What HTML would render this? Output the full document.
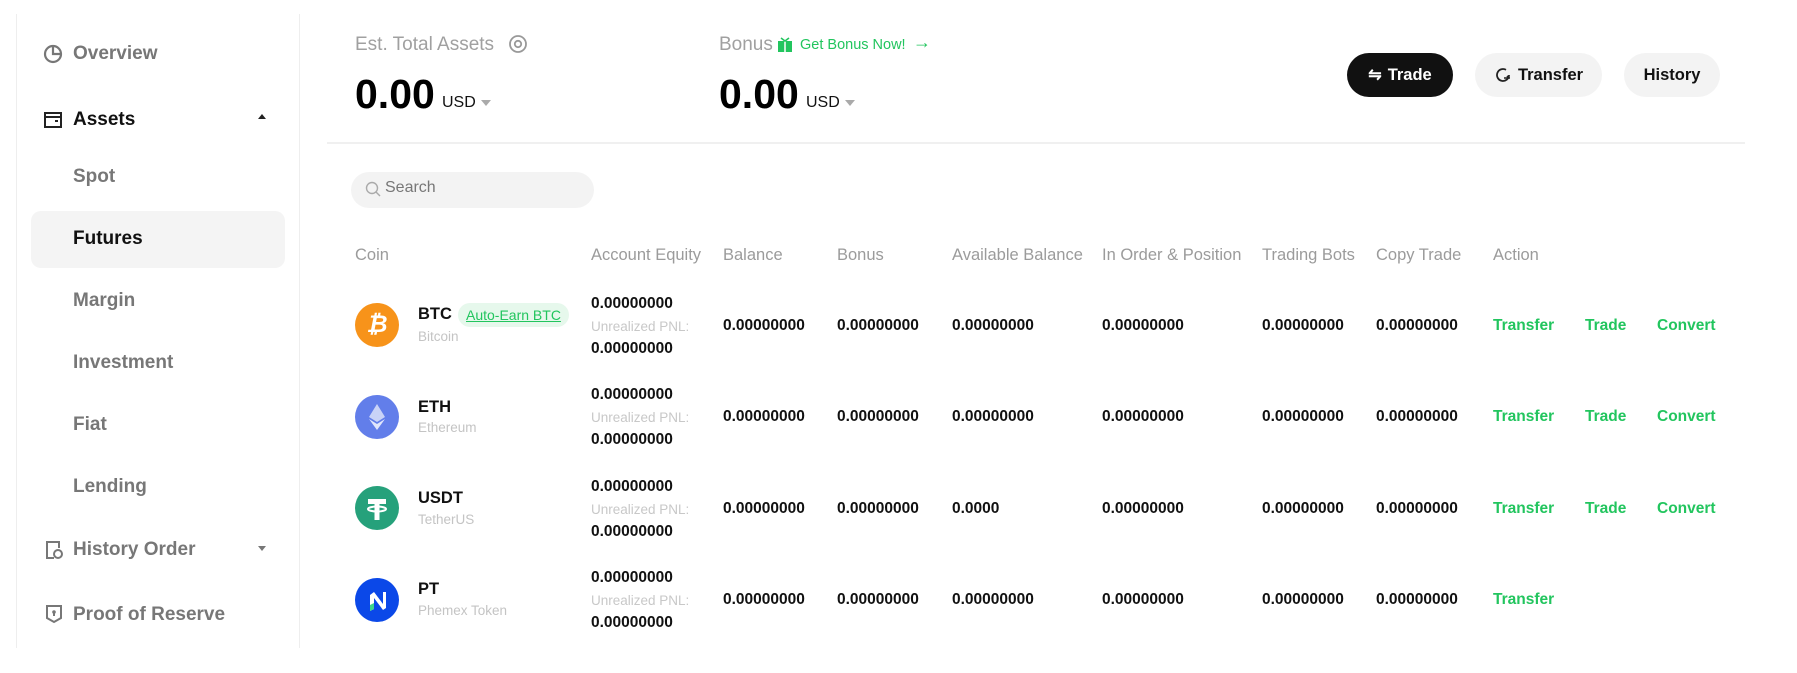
<!DOCTYPE html>
<html><head><meta charset="utf-8"><style>
*{margin:0;padding:0;box-sizing:border-box}
body{width:1797px;height:673px;background:#fff;font-family:"Liberation Sans",sans-serif;position:relative;overflow:hidden;color:#111}
.a{position:absolute;white-space:nowrap}
.side{position:absolute;left:16px;top:14px;width:284px;height:634px;border-left:1px solid #eee;border-right:1px solid #eee}
.si{position:absolute;left:73px;font-size:19px;font-weight:bold;color:#777}
.hd{position:absolute;top:246px;font-size:16.5px;color:#9b9b9b}
.v{position:absolute;font-size:15.5px;font-weight:bold;color:#111}
.g{position:absolute;font-size:15.5px;font-weight:bold;color:#22c55e}
.ic{position:absolute;left:355px;width:44px;height:44px;border-radius:50%}
.cn{position:absolute;left:418px;font-size:16.5px;font-weight:bold}
.cs{position:absolute;left:418px;font-size:13.5px;color:#c4c4c4}
.up{position:absolute;left:591px;font-size:13.5px;color:#c8c8c8}
.btn{position:absolute;top:53px;height:44px;border-radius:22px;font-size:16.5px;font-weight:bold;display:flex;align-items:center;justify-content:center;gap:6px}
</style></head><body>
<div class="side"></div>
<div style="position:absolute;left:31px;top:211px;width:254px;height:57px;background:#f4f4f4;border-radius:10px"></div>
<svg class="a" style="left:43px;top:44px" width="20" height="20" viewBox="0 0 20 20"><circle cx="10" cy="10" r="8" fill="none" stroke="#777" stroke-width="2.2"/><path d="M10 3v7h7" fill="none" stroke="#777" stroke-width="2.2"/></svg>
<div class="si" style="top:43px">Overview</div>
<svg class="a" style="left:43px;top:110px" width="20" height="20" viewBox="0 0 20 20"><rect x="2" y="3" width="16" height="14" fill="none" stroke="#222" stroke-width="2"/><path d="M2 7h16M12 11h3" stroke="#222" stroke-width="2"/></svg>
<div class="si" style="top:109px;color:#111">Assets</div>
<div class="a" style="left:258px;top:114px;width:0;height:0;border-left:4px solid transparent;border-right:4px solid transparent;border-bottom:5px solid #222"></div>
<div class="si" style="top:166px">Spot</div>
<div class="si" style="top:228px;color:#111">Futures</div>
<div class="si" style="top:290px">Margin</div>
<div class="si" style="top:352px">Investment</div>
<div class="si" style="top:414px">Fiat</div>
<div class="si" style="top:476px">Lending</div>
<svg class="a" style="left:44px;top:540px" width="20" height="20" viewBox="0 0 20 20"><path d="M13 2H3v16h7" fill="none" stroke="#777" stroke-width="2"/><path d="M13 2h2v6" fill="none" stroke="#777" stroke-width="2"/><circle cx="14" cy="14" r="4" fill="none" stroke="#777" stroke-width="2"/></svg>
<div class="si" style="top:539px">History Order</div>
<div class="a" style="left:258px;top:546px;width:0;height:0;border-left:4px solid transparent;border-right:4px solid transparent;border-top:5px solid #777"></div>
<svg class="a" style="left:45px;top:604px" width="18" height="20" viewBox="0 0 18 20"><path d="M2 2h14v12l-7 4-7-4z" fill="none" stroke="#777" stroke-width="2"/><circle cx="9" cy="8" r="1.8" fill="#777"/><path d="M9 9v3" stroke="#777" stroke-width="2"/></svg>
<div class="si" style="top:604px">Proof of Reserve</div>

<div class="a" style="left:355px;top:34px;font-size:19px;color:#a0a0a0">Est. Total Assets</div>
<svg class="a" style="left:508px;top:34px" width="20" height="20" viewBox="0 0 20 20"><circle cx="10" cy="10" r="8" fill="none" stroke="#999" stroke-width="1.8"/><circle cx="10" cy="10" r="3.2" fill="none" stroke="#999" stroke-width="1.8"/></svg>
<div class="a" style="left:355px;top:71px;font-size:41px;font-weight:bold;color:#000">0.00</div>
<div class="a" style="left:442px;top:94px;font-size:16px;color:#111">USD</div>
<div class="a" style="left:481px;top:100px;border-left:5px solid transparent;border-right:5px solid transparent;border-top:6px solid #aaa"></div>

<div class="a" style="left:719px;top:34px;font-size:19px;color:#a0a0a0">Bonus</div>
<svg class="a" style="left:777px;top:37px" width="16" height="16" viewBox="0 0 16 16"><rect x="1" y="4" width="14" height="11" fill="#22c55e"/><path d="M8 4v11" stroke="#fff" stroke-width="1.5"/><path d="M4 1l4 3 4-3" fill="none" stroke="#22c55e" stroke-width="1.6"/></svg>
<div class="a" style="left:800px;top:37px;font-size:14.5px;color:#22c55e">Get Bonus Now!</div>
<div class="a" style="left:913px;top:32px;font-size:18px;color:#22c55e">→</div>
<div class="a" style="left:719px;top:71px;font-size:41px;font-weight:bold;color:#000">0.00</div>
<div class="a" style="left:806px;top:94px;font-size:16px;color:#111">USD</div>
<div class="a" style="left:845px;top:100px;border-left:5px solid transparent;border-right:5px solid transparent;border-top:6px solid #aaa"></div>

<div class="btn" style="left:1347px;width:106px;background:#111;color:#fff"><span style="font-size:16px">⇋</span>Trade</div>
<div class="btn" style="left:1475px;width:127px;background:#f3f3f3"><svg width="18" height="18" viewBox="0 0 18 18"><path d="M15 9a6 6 0 1 1-3-5.2" fill="none" stroke="#222" stroke-width="1.8"/><path d="M10 12h6M13 10l2 2" stroke="#222" stroke-width="1.6" fill="none"/></svg>Transfer</div>
<div class="btn" style="left:1624px;width:96px;background:#f3f3f3">History</div>

<div class="a" style="left:327px;top:142px;width:1418px;height:2px;background:#f0f0f0"></div>
<div class="a" style="left:351px;top:172px;width:243px;height:36px;border-radius:18px;background:#f3f3f3"></div>
<svg class="a" style="left:365px;top:181px" width="17" height="17" viewBox="0 0 17 17"><circle cx="7" cy="7" r="5.5" fill="none" stroke="#aaa" stroke-width="1.4"/><path d="M11 11l4 4" stroke="#aaa" stroke-width="1.4"/></svg>
<div class="a" style="left:385px;top:179px;font-size:16px;color:#777">Search</div>

<div class="hd" style="left:355px">Coin</div>
<div class="hd" style="left:591px">Account Equity</div>
<div class="hd" style="left:723px">Balance</div>
<div class="hd" style="left:837px">Bonus</div>
<div class="hd" style="left:952px">Available Balance</div>
<div class="hd" style="left:1102px">In Order &amp; Position</div>
<div class="hd" style="left:1262px">Trading Bots</div>
<div class="hd" style="left:1376px">Copy Trade</div>
<div class="hd" style="left:1493px">Action</div>

<div class="ic" style="top:303px;background:#f7931a;color:#fff;font-weight:bold;font-size:24px;text-align:center;line-height:44px;font-style:italic">₿</div>
<div class="cn" style="top:305px">BTC</div>
<div class="a" style="left:458px;top:303px;height:24px;padding:0 8px;border-radius:12px;background:#e6f8ec;color:#22c55e;font-size:14px;line-height:24px;text-decoration:underline">Auto-Earn BTC</div>
<div class="cs" style="top:329px">Bitcoin</div>

<div class="ic" style="top:395px;background:#627eea"><svg width="44" height="44" viewBox="0 0 44 44"><path d="M22 9l-8 13 8 5 8-5z" fill="#c9d3f7"/><path d="M22 29l-8-5 8 11 8-11z" fill="#e0e6fb"/></svg></div>
<div class="cn" style="top:398px">ETH</div>
<div class="cs" style="top:420px">Ethereum</div>

<div class="ic" style="top:486px;background:#26a17b"><svg width="44" height="44" viewBox="0 0 44 44"><path d="M13 13h18v5h-6.5v16h-5V18H13z" fill="#fff"/><ellipse cx="22" cy="23" rx="9" ry="2.5" fill="none" stroke="#fff" stroke-width="2"/></svg></div>
<div class="cn" style="top:489px">USDT</div>
<div class="cs" style="top:512px">TetherUS</div>

<div class="ic" style="top:578px;background:#0b48e8"><svg width="44" height="44" viewBox="0 0 44 44"><path d="M15 17l4-3v17l-4 2z" fill="#fff"/><path d="M15 27l4-2v6l-4 2z" fill="#3dd68c"/><path d="M19 14l9 12V14h3v16l-3 2-9-12z" fill="#fff"/></svg></div>
<div class="cn" style="top:580px">PT</div>
<div class="cs" style="top:603px">Phemex Token</div>

<div class="v" style="left:591px;top:295px">0.00000000</div><div class="up" style="top:319px">Unrealized PNL:</div><div class="v" style="left:591px;top:340px">0.00000000</div>
<div class="v" style="left:591px;top:386px">0.00000000</div><div class="up" style="top:410px">Unrealized PNL:</div><div class="v" style="left:591px;top:431px">0.00000000</div>
<div class="v" style="left:591px;top:478px">0.00000000</div><div class="up" style="top:502px">Unrealized PNL:</div><div class="v" style="left:591px;top:523px">0.00000000</div>
<div class="v" style="left:591px;top:569px">0.00000000</div><div class="up" style="top:593px">Unrealized PNL:</div><div class="v" style="left:591px;top:614px">0.00000000</div>

<div class="v" style="left:723px;top:317px">0.00000000</div><div class="v" style="left:837px;top:317px">0.00000000</div><div class="v" style="left:952px;top:317px">0.00000000</div><div class="v" style="left:1102px;top:317px">0.00000000</div><div class="v" style="left:1262px;top:317px">0.00000000</div><div class="v" style="left:1376px;top:317px">0.00000000</div>
<div class="g" style="left:1493px;top:317px">Transfer</div><div class="g" style="left:1585px;top:317px">Trade</div><div class="g" style="left:1657px;top:317px">Convert</div>

<div class="v" style="left:723px;top:408px">0.00000000</div><div class="v" style="left:837px;top:408px">0.00000000</div><div class="v" style="left:952px;top:408px">0.00000000</div><div class="v" style="left:1102px;top:408px">0.00000000</div><div class="v" style="left:1262px;top:408px">0.00000000</div><div class="v" style="left:1376px;top:408px">0.00000000</div>
<div class="g" style="left:1493px;top:408px">Transfer</div><div class="g" style="left:1585px;top:408px">Trade</div><div class="g" style="left:1657px;top:408px">Convert</div>

<div class="v" style="left:723px;top:500px">0.00000000</div><div class="v" style="left:837px;top:500px">0.00000000</div><div class="v" style="left:952px;top:500px">0.0000</div><div class="v" style="left:1102px;top:500px">0.00000000</div><div class="v" style="left:1262px;top:500px">0.00000000</div><div class="v" style="left:1376px;top:500px">0.00000000</div>
<div class="g" style="left:1493px;top:500px">Transfer</div><div class="g" style="left:1585px;top:500px">Trade</div><div class="g" style="left:1657px;top:500px">Convert</div>

<div class="v" style="left:723px;top:591px">0.00000000</div><div class="v" style="left:837px;top:591px">0.00000000</div><div class="v" style="left:952px;top:591px">0.00000000</div><div class="v" style="left:1102px;top:591px">0.00000000</div><div class="v" style="left:1262px;top:591px">0.00000000</div><div class="v" style="left:1376px;top:591px">0.00000000</div>
<div class="g" style="left:1493px;top:591px">Transfer</div>
</body></html>
